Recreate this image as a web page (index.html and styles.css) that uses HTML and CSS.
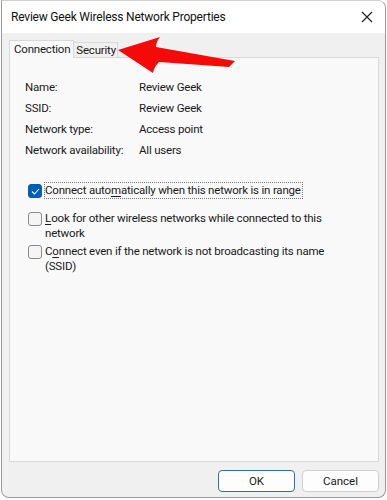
FILE: index.html
```html
<!DOCTYPE html>
<html lang="en">
<head>
    <meta charset="UTF-8">
    <meta name="viewport" content="width=device-width, initial-scale=1.0">
    <title>Review Geek Wireless Network Properties</title>
    <link rel="stylesheet" href="styles.css">
</head>
<body>
    <div class="window">
        <div class="titlebar">
            <span class="title">Review Geek Wireless Network Properties</span>
            <svg class="close" width="12" height="12" viewBox="0 0 12 12">
                <path d="M1 1 L11 11 M11 1 L1 11" stroke="#222" stroke-width="1.2" fill="none"/>
            </svg>
        </div>
        <div class="body">
            <div class="tabs">
                <div class="tab active">Connection</div>
                <div class="tab">Security</div>
            </div>
            <div class="panel">
                <div class="info">
                    <span>Name:</span><span>Review Geek</span>
                    <span>SSID:</span><span>Review Geek</span>
                    <span>Network type:</span><span>Access point</span>
                    <span>Network availability:</span><span>All users</span>
                </div>
                <div class="options">
                    <label class="check first">
                        <span class="box checked">
                            <svg width="9" height="7" viewBox="0 0 9 7"><path d="M1 3.5 L3.5 6 L8 1" stroke="#fff" stroke-width="1.1" fill="none"/></svg>
                        </span>
                        <span class="text focused">Connect auto<u>m</u>atically when this network is in range</span>
                    </label>
                    <label class="check">
                        <span class="box"></span>
                        <span class="text"><u>L</u>ook for other wireless networks while connected to this network</span>
                    </label>
                    <label class="check">
                        <span class="box"></span>
                        <span class="text">C<u>o</u>nnect even if the network is not broadcasting its name (SSID)</span>
                    </label>
                </div>
            </div>
            <div class="buttons">
                <button class="btn default">OK</button>
                <button class="btn">Cancel</button>
            </div>
        </div>
        <!-- red callout arrow -->
        <svg class="arrow" width="387" height="100" viewBox="0 0 387 100">
            <path d="M118 50 L160 37 Q156 42 156 47 L235 61 L229 67 L159 62 Q154 67 153 73 Z" fill="#f50a0a"/>
        </svg>
    </div>
</body>
</html>
```

FILE: styles.css
```css
/* General styling */
body {
    margin: 0;
    background-color: #fff;
    font-family: Roboto, "Liberation Sans", sans-serif;
    font-size: 11.5px;
    letter-spacing: -0.2px;
    color: #1a1a1a;
}
.window {
    position: relative;
    width: 383px;
    height: 496px;
    margin-left: 1px;
    border: 1px solid #9a9a9a;
    border-top-color: #d0d0d0;
    border-radius: 0 8px 8px 8px;
    background-color: #f0f0f0;
    overflow: hidden;
}
.titlebar {
    display: flex;
    align-items: center;
    justify-content: space-between;
    height: 32px;
    padding: 0 12px 0 9px;
    background-color: #fff;
}
.title {
    font-size: 12px;
    color: #111;
}
.body {
    padding: 7px 6px 0 7px;
}
/* Tabs */
.tabs {
    display: flex;
    align-items: flex-end;
    height: 17px;
}
.tab {
    height: 14px;
    padding: 0 1px 0 2px;
    border: 1px solid #d9d9d9;
    border-bottom: none;
    border-left: none;
    background-color: #f0f0f0;
    line-height: 14px;
}
.tab.active {
    height: 17px;
    padding: 0 3px 0 4px;
    border-left: 1px solid #d9d9d9;
    background-color: #f9f9f9;
    line-height: 16px;
    position: relative;
    z-index: 1;
    margin-bottom: -1px;
}
.panel {
    height: 405px;
    border: 1px solid #d9d9d9;
    background-color: #f9f9f9;
    padding: 21px 0 0 15px;
    box-sizing: border-box;
}
.info {
    display: grid;
    grid-template-columns: 114px auto;
    row-gap: 5px;
    line-height: 16px;
}
.options {
    margin-top: 25px;
    padding-left: 3px;
}
.check {
    display: flex;
    align-items: flex-start;
    line-height: 15px;
    margin-bottom: 3px;
}
.check.first {
    margin-bottom: 13px;
}
.box {
    flex: none;
    display: flex;
    align-items: center;
    justify-content: center;
    width: 12px;
    height: 12px;
    margin: 1px 3px 0 0;
    border: 1px solid #8a8a8a;
    border-radius: 3px;
    background-color: #f5f5f5;
}
.box.checked {
    background-color: #005fb8;
    border-color: #005fb8;
}
.text {
    width: 285px;
}
.text.focused {
    width: auto;
    outline: 1px dotted #777;
    outline-offset: 0;
    padding-right: 1px;
}
u {
    letter-spacing: 0;
    text-decoration-thickness: 1px;
    text-underline-offset: 2px;
}
.buttons {
    display: flex;
    justify-content: flex-end;
    gap: 7px;
    padding-top: 8px;
}
.btn {
    width: 77px;
    height: 22px;
    font-family: Roboto, "Liberation Sans", sans-serif;
    font-size: 11.5px;
    color: #1a1a1a;
    background-color: #fdfdfd;
    border: 1px solid #cfcfcf;
    border-radius: 4px;
    padding: 0;
}
.btn.default {
    border-color: #2f6db5;
}
.arrow {
    position: absolute;
    top: -1px;
    left: -2px;
    pointer-events: none;
}
```
